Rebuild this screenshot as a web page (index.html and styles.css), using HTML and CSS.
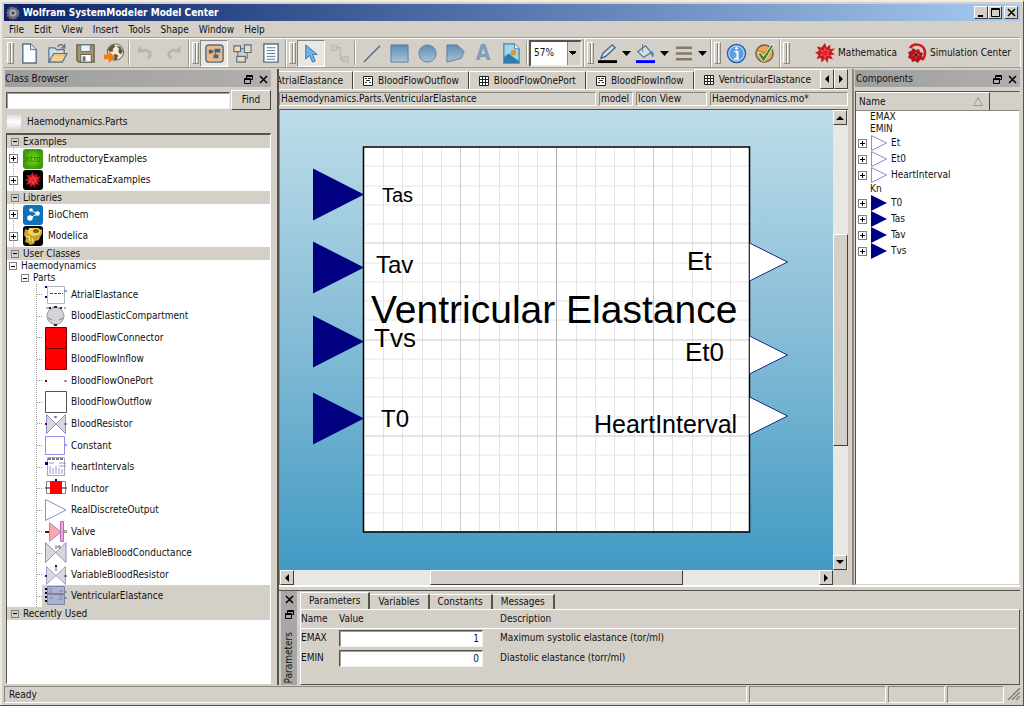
FILE: index.html
```html
<!DOCTYPE html>
<html lang="en">
<head>
    <meta charset="UTF-8">
    <meta name="viewport" content="width=device-width, initial-scale=1.0">
    <title>Wolfram SystemModeler Model Center</title>
    <link rel="stylesheet" href="styles.css">
</head>
<body>
    <svg width="0" height="0" class="defs">
        <defs>
            <linearGradient id="steel" x1="0" y1="0" x2="0" y2="1">
                <stop offset="0" stop-color="#5f8cb2" />
                <stop offset="1" stop-color="#a9c2d8" />
            </linearGradient>
            <radialGradient id="lime">
                <stop offset="0" stop-color="#7fe01c" />
                <stop offset="1" stop-color="#3a9a08" />
            </radialGradient>
            <symbol id="spikey" viewBox="0 0 20 20">
                <path d="M10 0l1.500 4.500L15.500 1.500l-.5 4.500 5-.5-3.500 3.500L20 11.500l-4.500.5 2.500 4.500-4.500-1.500L12.500 20 10 16l-3.500 3.500-.5-4.500L1.500 16l2-4L0 9.500l4-1.500L2 3.500l4.500 1z" fill="#c8191c" />
                <path d="M10 4l1.500 3.500 4-.5-2.500 3 2 3.500-3.500-1L10 16l-1.500-3.500-4 .5 2.500-3-2-3.500 3.500 1z" fill="#ee5350" />
                <path d="M10 7l3 2-1 3.500H8L7 9z" fill="#d8282a" />
            </symbol>
            <symbol id="tri-out" viewBox="0 0 18 16">
                <path d="M1.500.5v15L16.500 8z" fill="#fff" stroke="#8c8ccf" />
            </symbol>
            <symbol id="tri-in" viewBox="0 0 18 16">
                <path d="M1 0v16L17 8z" fill="#000080" />
            </symbol>
            <symbol id="float" viewBox="0 0 9 9">
                <path d="M2.500 3V.5h6v4H7M2.500 1.500h6M.5 3.500h6v5h-6zM.5 4.500h6" fill="none" stroke="#000" />
            </symbol>
            <symbol id="close" viewBox="0 0 9 9">
                <path d="M1 1l7 7M8 1L1 8" fill="none" stroke="#000" stroke-width="1.500" />
            </symbol>
            <symbol id="grid-icon" viewBox="0 0 10 10">
                <path d="M.5 .5h9v9h-9zM3.500 0v10M6.500 0v10M0 3.500h10M0 6.500h10" fill="#fff" stroke="#222" />
            </symbol>
            <symbol id="text-icon" viewBox="0 0 10 10">
                <path d="M.5 .5h9v9h-9z" fill="#fff" stroke="#222" />
                <path d="M2 2.500h2M5 2.500h3M3 4.500h4M2 6.500h2M6 6.500h2" fill="none" stroke="#333" />
            </symbol>
            <symbol id="down" viewBox="0 0 9 5">
                <path d="M0 0h9L4.500 5z" />
            </symbol>
        </defs>
    </svg>

    <div class="window">
        <header class="titlebar">
            <svg class="app-icon" viewBox="0 0 14 14">
                <path d="M7 0l1.500 2 2-1 .5 2.500 2.500.5-1 2L14 7l-1.500 1.500 1 2-2.500.5-.5 2.500-2-1L7 14l-1.500-1.500-2 1L3 11l-2.500-.5 1-2L0 7l1.500-1.500-1-2L3 3l.5-2.500 2 1z" fill="#6c6c78" />
                <circle cx="7" cy="7" r="3.500" fill="#a8aab4" />
                <circle cx="7" cy="7" r="1.500" fill="#3c3c48" />
                <path d="M2 10l2 3M10 12l2-2" stroke="#c02030" />
            </svg>
            <h1>Wolfram SystemModeler Model Center</h1>
            <div class="win-buttons">
                <button aria-label="Minimize"><svg viewBox="0 0 9 9"><path d="M1 7h5v2H1z" /></svg></button>
                <button aria-label="Maximize"><svg viewBox="0 0 9 9"><path d="M.5 .5h8v8h-8zM0 1.500h9" fill="none" stroke="#000" /></svg></button>
                <button aria-label="Close"><svg><use href="#close" /></svg></button>
            </div>
        </header>

        <nav class="menubar">
            <button>File</button>
            <button>Edit</button>
            <button>View</button>
            <button>Insert</button>
            <button>Tools</button>
            <button>Shape</button>
            <button>Window</button>
            <button>Help</button>
        </nav>

        <div class="toolbar">
            <div class="group">
                <span class="grip"></span>
                <button class="tool" aria-label="New"><svg viewBox="0 0 22 22"><path d="M4 1h8l6 6v14H4z" fill="#fff" stroke="#53738c" stroke-width="1.500" /><path d="M12 1v6h6" fill="#dbe6ee" stroke="#53738c" /></svg></button>
                <button class="tool" aria-label="Open"><svg viewBox="0 0 22 22"><path d="M2 20V5h6l2 2h8v4" fill="#cfe0ea" stroke="#53738c" stroke-width="1.300" /><path d="M2 20l5-9h14l-5 9z" fill="#f1c27d" stroke="#53738c" stroke-width="1.300" /><path d="M5 15h13M4 17.500h13" stroke="#fbe4bd" /><path d="M11 4c2-3 5-3 7 0M18.500 1v4h-4" fill="none" stroke="#53738c" stroke-width="1.300" /></svg></button>
                <button class="tool" aria-label="Save"><svg viewBox="0 0 22 22"><path d="M2 2h18v18H4l-2-2z" fill="#a9946e" stroke="#5d5a4a" stroke-width="1.300" /><path d="M6 2h10v7H6z" fill="#e9f0f4" stroke="#53738c" /><path d="M6 12h11v8H6z" fill="#fff" stroke="#5d5a4a" /><path d="M8 14h3v5H8z" fill="#53738c" /></svg></button>
                <button class="tool" aria-label="Export"><svg viewBox="0 0 22 22"><circle cx="13" cy="9.500" r="8.500" fill="#f3ecd4" stroke="#5c573f" /><path d="M7 4l4-2.500 2 2-3 3 1 2-3 1-3-2zM14 3l4 1 3 5-3 3-2-3 1-3zM12 11l4 2-2 5-3-1z" fill="#5c573f" /><path d="M1 12h5V8.500L13 15l-7 6v-4H1z" fill="#f07f13" /></svg></button>
                <span class="sep"></span>
                <button class="tool" aria-label="Undo"><svg viewBox="0 0 22 22"><path d="M6 9c4-3 10-1 10 3 0 2-1 3-3 4" fill="none" stroke="#b9b6b0" stroke-width="3" /><path d="M3 10l1-7 6 7z" fill="#b9b6b0" /></svg></button>
                <button class="tool" aria-label="Redo"><svg viewBox="0 0 22 22"><path d="M16 9c-4-3-10-1-10 3 0 2 1 3 3 4" fill="none" stroke="#b9b6b0" stroke-width="3" /><path d="M19 10l-1-7-6 7z" fill="#b9b6b0" /></svg></button>
            </div>
            <div class="group">
                <span class="grip"></span>
                <button class="tool pressed" aria-label="Icon view"><svg viewBox="0 0 22 22"><rect x="2" y="2" width="18" height="18" rx="3" fill="#f2b884" stroke="#4c6e8c" stroke-width="1.500" /><path d="M11 6h6v4h-6zM5 7h4v4H5zM10 12h5v4h-5z" fill="#3d668a" /><path d="M9 9h2M12 10v2" stroke="#3d668a" fill="none" /></svg></button>
                <button class="tool" aria-label="Diagram view"><svg viewBox="0 0 22 22"><path d="M6 9v8M9 6h4M16 10v6h-3" fill="none" stroke="#53738c" /><path d="M2 3h7v6H2zM13 2h7v8h-7zM5 14h9v6H5z" fill="#f3d6b4" stroke="#53738c" stroke-width="1.200" /></svg></button>
                <button class="tool" aria-label="Text view"><svg viewBox="0 0 22 22"><path d="M4 1h15v19H4z" fill="#fff" stroke="#53738c" stroke-width="1.500" /><path d="M7 5h9M7 8h9M7 11h9M7 14h9M7 17h9" stroke="#53738c" /></svg></button>
            </div>
            <div class="group">
                <span class="grip"></span>
                <button class="tool pressed" aria-label="Select"><svg viewBox="0 0 22 22"><path d="M5 2l12 10h-5l3 7-3 1-3-7-4 4z" fill="#6fb0e8" stroke="#3f74a8" /></svg></button>
                <button class="tool" aria-label="Connect"><svg viewBox="0 0 22 22"><path d="M2 2h6v6H2zM14 14h6v6h-6z" fill="#cbc8c1" stroke="#b9b6b0" /><path d="M8 5h4v12h2" fill="none" stroke="#b9b6b0" stroke-width="1.500" /></svg></button>
                <span class="sep"></span>
                <button class="tool" aria-label="Line"><svg viewBox="0 0 22 22"><path d="M3 20L20 3" stroke="#4d708e" stroke-width="1.500" /></svg></button>
                <button class="tool" aria-label="Rectangle"><svg viewBox="0 0 22 22"><path d="M2 2h18v18H2z" fill="url(#steel)" stroke="#5d7f9c" /></svg></button>
                <button class="tool" aria-label="Ellipse"><svg viewBox="0 0 22 22"><circle cx="11" cy="11" r="9" fill="url(#steel)" stroke="#5d7f9c" /></svg></button>
                <button class="tool" aria-label="Polygon"><svg viewBox="0 0 22 22"><path d="M2 2h11l7 7-3 7-15 4z" fill="url(#steel)" stroke="#5d7f9c" /></svg></button>
                <button class="tool letter" aria-label="Text">A</button>
                <button class="tool" aria-label="Bitmap"><svg viewBox="0 0 22 22"><path d="M3 1h11l5 5v15H3z" fill="#a4d5ee" stroke="#4585ae" stroke-width="1.300" /><path d="M3 15l5-4 11 8v2H3z" fill="#2f7dad" /><path d="M14 1v5h5" fill="#fff" stroke="#4585ae" /><circle cx="13" cy="10" r="3" fill="#d9982b" /></svg></button>
                <span class="sep"></span>
                <select class="zoom" aria-label="Zoom">
                    <option>57%</option>
                </select>
            </div>
            <div class="group">
                <span class="grip"></span>
                <button class="tool wide" aria-label="Line colour"><svg viewBox="0 0 22 22"><path d="M6 11l10-9 3 3-10 9-5 2z" fill="#c7dcea" stroke="#3c627f" stroke-width="1.300" /><path d="M1 18h20v3H1z" /></svg><svg class="arrow"><use href="#down" /></svg></button>
                <button class="tool wide" aria-label="Fill colour"><svg viewBox="0 0 22 22"><path d="M3 9l8-6 6 7-8 5z" fill="#cfdfe9" stroke="#53738c" stroke-width="1.300" /><path d="M8 1v8" stroke="#53738c" /><path d="M16 8c4 1 4 4 3 7-2-1-2-4-3-7z" fill="#4585c4" /><path d="M1 18h20v3H1z" fill="#0000ff" /></svg><svg class="arrow"><use href="#down" /></svg></button>
                <button class="tool wide" aria-label="Line width"><svg viewBox="0 0 22 22"><path d="M3 5h17M3 11h17M3 17h17" stroke="#807a66" stroke-width="2.500" /></svg><svg class="arrow"><use href="#down" /></svg></button>
            </div>
            <div class="group">
                <span class="grip"></span>
                <button class="tool" aria-label="Information"><svg viewBox="0 0 22 22"><circle cx="11" cy="11" r="9.500" fill="#5f9ddb" stroke="#2f66a4" stroke-width="1.500" /><circle cx="11" cy="11" r="8" fill="none" stroke="#d5e7f7" /><path d="M9 9h3v7M8.500 16.500h5" fill="none" stroke="#fff" stroke-width="2" /><circle cx="11" cy="5.500" r="1.300" fill="#fff" /></svg></button>
                <button class="tool" aria-label="Validate class"><svg viewBox="0 0 22 22"><circle cx="11" cy="11" r="9" fill="#e9a65c" stroke="#6d6248" stroke-width="1.500" /><path d="M2 7l9 3 7-6M4 16l7-6 2 10" fill="none" stroke="#c27c30" /><path d="M4 11l3-1 3 4 8-12h3L11 19H9z" fill="#3f8a25" stroke="#fff" stroke-width=".8" /></svg></button>
            </div>
            <div class="group last">
                <span class="grip"></span>
                <button class="launch"><svg viewBox="0 0 20 20"><use href="#spikey" /></svg>Mathematica</button>
                <button class="launch"><svg viewBox="0 0 20 20"><path d="M3 5C7-1 18 1 18 10c0 3-1 5-3 7" fill="none" stroke="#d4161a" stroke-width="2.500" /><path d="M6 5l3 2 3-1 1 3 3 1-1 3 1 3-3 1-2 3-3-2-3 1-1-3-3-1 1-3-1-3 3-1z" fill="#b3151a" /><path d="M9 8l1 3 3 1-3 1-1 3-1-3-3-1 3-1z" fill="#e65b5b" /><circle cx="9" cy="12" r="1.500" fill="#5b070a" /></svg>Simulation Center</button>
            </div>
        </div>

        <main class="workspace">
            <section class="dock classes">
                <div class="dock-title">
                    <h2>Class Browser</h2>
                    <button aria-label="Float"><svg><use href="#float" /></svg></button>
                    <button aria-label="Close"><svg><use href="#close" /></svg></button>
                </div>
                <form class="search">
                    <input type="text" aria-label="Find class">
                    <button type="button">Find</button>
                </form>
                <p class="current"><span class="blank-icon"></span>Haemodynamics.Parts</p>
                <div class="tree">
                    <h3><button class="box minus" aria-label="Collapse"></button>Examples</h3>
                    <ul class="roots">
                        <li><button class="box plus" aria-label="Expand"></button><svg viewBox="0 0 20 20"><rect width="20" height="20" rx="3" fill="url(#lime)" /><text x="1" y="13" class="intro">intro</text></svg>IntroductoryExamples</li>
                        <li><button class="box plus" aria-label="Expand"></button><svg viewBox="0 0 20 20"><rect width="20" height="20" rx="3" /><use href="#spikey" x="2" y="2" width="16" height="16" /></svg>MathematicaExamples</li>
                    </ul>
                    <h3><button class="box minus" aria-label="Collapse"></button>Libraries</h3>
                    <ul class="roots">
                        <li><button class="box plus" aria-label="Expand"></button><svg viewBox="0 0 20 20"><rect width="20" height="20" rx="3" fill="#0d72b8" /><path d="M8 5l6 4-7 4" fill="none" stroke="#fff" /><circle cx="8" cy="5" r="1.800" fill="#fff" /><circle cx="14.500" cy="8.500" r="2.300" fill="#fff" /><circle cx="7" cy="13" r="2.800" fill="#fff" /></svg>BioChem</li>
                        <li><button class="box plus" aria-label="Expand"></button><svg viewBox="0 0 20 20"><rect width="20" height="20" rx="3" /><path d="M2 3l3 1 2-2h8l2 2 2-1v5l-2 3-1 3-4 1-1 3-4 1-2-2-3-1 1-4-2-3z" fill="#c9a32a" /><path d="M6 2h9l3 2-2 5-7 1-4-3z" fill="#f2d65c" /><ellipse cx="13" cy="5" rx="3" ry="2" fill="#7e6418" /><path d="M3 11l3-1 1 5M9 12l1 4" stroke="#fff0a0" fill="none" /></svg>Modelica</li>
                    </ul>
                    <h3><button class="box minus" aria-label="Collapse"></button>User Classes</h3>
                    <p class="node"><button class="box minus" aria-label="Collapse"></button>Haemodynamics</p>
                    <p class="node child"><button class="box minus" aria-label="Collapse"></button>Parts</p>
                    <ul class="leaves">
                        <li><span><svg viewBox="0 0 22 22"><path d="M2.500 2.500h17v17h-17z" fill="#fff" stroke="#b5b5bd" /><path d="M5 9.500h13" stroke="#555" stroke-dasharray="3 1" /><path d="M0 2h2v2H0zM0 12h2v2H0z" fill="#000080" /><path d="M19 6l3 1-3 1" fill="none" stroke="#8c8ccf" /></svg>AtrialElastance</span></li>
                        <li><span><svg viewBox="0 0 22 22"><path d="M1 3h20" stroke="#667" stroke-dasharray="4 2" /><circle cx="10.500" cy="11" r="8.500" fill="#d4d4d8" stroke="#9a9aa8" /><path d="M3 13l4 2M18 13l-4 2" stroke="#778" /><path d="M9 1h3v2H9zM4 2h2v2H4zM15 2h2v2h-2zM9 19h3v2H9z" fill="#224" /></svg>BloodElasticCompartment</span></li>
                        <li><span><svg viewBox="0 0 22 22"><path d="M.5 .5h21v21H.5z" fill="#f00" stroke="#7c0000" /></svg>BloodFlowConnector</span></li>
                        <li><span><svg viewBox="0 0 22 22"><path d="M.5 .5h21v21H.5z" fill="#f00" stroke="#7c0000" /></svg>BloodFlowInflow</span></li>
                        <li><span><svg viewBox="0 0 22 22"><path d="M0 10h2v2H0z" fill="#800000" /><path d="M19.500 10.500h2v1h-2z" fill="none" stroke="#888" /></svg>BloodFlowOnePort</span></li>
                        <li><span><svg viewBox="0 0 22 22"><path d="M.5 .5h21v21H.5z" fill="#fff" stroke="#555" /></svg>BloodFlowOutflow</span></li>
                        <li><span><svg viewBox="0 0 22 22"><path d="M1.500 1.500v19L20.500 1.500v19z" fill="#d8d8dc" stroke="#8f8fd6" /><path d="M0 10h2v2H0z" fill="#800000" /><path d="M9.500 3.500h2v1h-2zM19.500 10.500h2v1h-2z" fill="none" stroke="#779" /></svg>BloodResistor</span></li>
                        <li><span><svg viewBox="0 0 22 22"><path d="M.5 1.500h19v18H.5z" fill="#fff" stroke="#8f8fe6" /><path d="M20 9l2 1-2 1" fill="none" stroke="#8f8fd6" /></svg>Constant</span></li>
                        <li><span><svg viewBox="0 0 22 22"><path d="M2.500 1.500h17v18h-17z" fill="#fff" stroke="#aaa" /><path d="M3 3h16" stroke="#777" stroke-width="2" stroke-dasharray="3 1" /><path d="M0 6h3v3H0z" fill="#000080" /><path d="M4 7h5M14 7h7M14 10h7" stroke="#8f8fd6" /><path d="M5 10v8M8 12v6M11 10v8M14 12v6M17 13v5" stroke="#8f8fd6" /></svg>heartIntervals</span></li>
                        <li><span><svg viewBox="0 0 22 22"><path d="M1.500 3.500h19v12h-19z" fill="#fff" stroke="#888" /><path d="M5 3h12v13H5z" fill="#f00" /><path d="M0 10h5M17 10h5" stroke="#500" /><path d="M10 1h2v2h-2z" fill="#000080" /></svg>Inductor</span></li>
                        <li><span><svg viewBox="0 0 22 22"><path d="M.5 .5v21L21 11z" fill="#fff" stroke="#8c8ccf" /></svg>RealDiscreteOutput</span></li>
                        <li><span><svg viewBox="0 0 22 22"><path d="M4.500 1.500v19L16 11z" fill="#f9a8ae" stroke="#a088cc" /><path d="M15.500 .5h3v20h-3z" fill="#f6a0cc" stroke="#b070c0" /><path d="M0 10h4v2H0z" fill="#800000" /><path d="M19.500 9.500h2v2h-2z" fill="#fff" stroke="#888" /></svg>Valve</span></li>
                        <li><span><svg viewBox="0 0 22 22"><path d="M.5 .5v20L21 .5v20z" fill="#d8d8dc" stroke="#8f8fd6" /><path d="M11 3v4M13 6V4h2v3" fill="none" stroke="#667" /></svg>VariableBloodConductance</span></li>
                        <li><span><svg viewBox="0 0 22 22"><path d="M1.500 2.500v18L20.500 2.500v18z" fill="#d8d8dc" stroke="#9f9fd6" /><path d="M10 1h2v2h-2zM0 11h2v2H0z" fill="#224" /><path d="M11 3v4M19.500 11.500h2v1h-2z" fill="none" stroke="#667" /></svg>VariableBloodResistor</span></li>
                        <li class="selected"><span><svg viewBox="0 0 22 22"><path d="M2.500 1.500h17v18h-17z" fill="#aab3cf" stroke="#7c86ab" /><path d="M3 9h16" stroke="#556" /><path d="M4 4h3M4 7h3M4 13h4M14 6h4M14 11h4M13 14h5" stroke="#7c86ab" /><path d="M0 3h2v2H0zM0 7h2v2H0zM0 11h2v2H0zM0 15h2v2H0z" fill="#000050" /><path d="M19 6l3 1-3 1M19 12l3 1-3 1" fill="none" stroke="#889" /></svg>VentricularElastance</span></li>
                    </ul>
                    <h3><button class="box minus" aria-label="Collapse"></button>Recently Used</h3>
                </div>
            </section>

            <div class="right-side">
                <div class="upper">
                    <section class="editor">
                        <div class="tabs">
                            <div class="tab-strip">
                                <button class="tab">AtrialElastance</button>
                                <button class="tab"><svg><use href="#text-icon" /></svg>BloodFlowOutflow</button>
                                <button class="tab"><svg><use href="#grid-icon" /></svg>BloodFlowOnePort</button>
                                <button class="tab"><svg><use href="#text-icon" /></svg>BloodFlowInflow</button>
                                <button class="tab active"><svg><use href="#grid-icon" /></svg>VentricularElastance</button>
                            </div>
                            <button class="scroll-btn" aria-label="Scroll tabs left"><svg viewBox="0 0 8 8"><path d="M6 0v8L2 4z" /></svg></button>
                            <button class="scroll-btn" aria-label="Scroll tabs right"><svg viewBox="0 0 8 8"><path d="M2 0v8l4-4z" /></svg></button>
                        </div>
                        <div class="path">
                            <span>Haemodynamics.Parts.VentricularElastance</span>
                            <span>model</span>
                            <span>Icon View</span>
                            <span>Haemodynamics.mo*</span>
                        </div>
                        <div class="view">
                            <svg class="canvas" viewBox="0 0 553 459">
                                <rect x="84" y="36" width="385" height="385" fill="#fff" />
                                <!-- minor grid -->
                                <path class="minor" d="M103.500 37v384M122.500 37v384M142.500 37v384M161.500 37v384M199.500 37v384M219.500 37v384M238.500 37v384M257.500 37v384M296.500 37v384M315.500 37v384M334.500 37v384M354.500 37v384M392.500 37v384M412.500 37v384M431.500 37v384M450.500 37v384M85 55.500h384M85 75.500h384M85 94.500h384M85 113.500h384M85 152.500h384M85 171.500h384M85 190.500h384M85 209.500h384M85 248.500h384M85 267.500h384M85 286.500h384M85 306.500h384M85 344.500h384M85 364.500h384M85 383.500h384M85 402.500h384" />
                                <path class="major" d="M180.500 37v384M373.500 37v384M85 132.500h384M85 325.500h384M85 229.500h384" />
                                <path class="axis" d="M276.500 37v384" />
                                <rect x="83.500" y="36.500" width="386" height="385" fill="none" stroke="#000" stroke-width="1.500" />
                                <!-- input ports -->
                                <path class="input" d="M33 58v52l51-26zM33 131v52l51-26zM33 205v52l51-26zM33 282v52l51-26z" />
                                <!-- output ports -->
                                <path class="output" d="M469.500 132.500v38l38-19zM469.500 225.500v38l38-19zM469.500 286.500v38l38-19z" />
                                <g class="labels">
                                    <text x="102" y="91" class="small">Tas</text>
                                    <text x="96" y="162" class="medium">Tav</text>
                                    <text x="94" y="236" class="large">Tvs</text>
                                    <text x="101" y="316" class="medium">T0</text>
                                    <text x="91" y="212" class="name">Ventricular Elastance</text>
                                    <text x="407" y="159" class="large">Et</text>
                                    <text x="405" y="250" class="large">Et0</text>
                                    <text x="314" y="322" class="output-label">HeartInterval</text>
                                </g>
                            </svg>
                            <div class="scroll vertical">
                                <button class="scroll-btn" aria-label="Scroll up"><svg viewBox="0 0 8 8"><path d="M0 6h8L4 2z" /></svg></button>
                                <span class="before"></span><span class="thumb"></span><span class="after"></span>
                                <button class="scroll-btn" aria-label="Scroll down"><svg viewBox="0 0 8 8"><path d="M0 2h8L4 6z" /></svg></button>
                            </div>
                            <div class="scroll horizontal">
                                <button class="scroll-btn" aria-label="Scroll left"><svg viewBox="0 0 8 8"><path d="M6 0v8L2 4z" /></svg></button>
                                <span class="before"></span><span class="thumb"></span><span class="after"></span>
                                <button class="scroll-btn" aria-label="Scroll right"><svg viewBox="0 0 8 8"><path d="M2 0v8l4-4z" /></svg></button>
                            </div>
                        </div>
                    </section>

                    <section class="dock components">
                        <div class="dock-title">
                            <h2>Components</h2>
                            <button aria-label="Float"><svg><use href="#float" /></svg></button>
                            <button aria-label="Close"><svg><use href="#close" /></svg></button>
                        </div>
                        <div class="list">
                            <div class="list-head"><button>Name<svg viewBox="0 0 10 9"><path d="M.5 8.500L5 .5l4.500 8z" fill="none" stroke="#a09d96" /></svg></button></div>
                            <ul>
                                <li class="plain">EMAX</li>
                                <li class="plain">EMIN</li>
                                <li><button class="box plus" aria-label="Expand"></button><svg><use href="#tri-out" /></svg>Et</li>
                                <li><button class="box plus" aria-label="Expand"></button><svg><use href="#tri-out" /></svg>Et0</li>
                                <li><button class="box plus" aria-label="Expand"></button><svg><use href="#tri-out" /></svg>HeartInterval</li>
                                <li class="plain">Kn</li>
                                <li><button class="box plus" aria-label="Expand"></button><svg><use href="#tri-in" /></svg>T0</li>
                                <li><button class="box plus" aria-label="Expand"></button><svg><use href="#tri-in" /></svg>Tas</li>
                                <li><button class="box plus" aria-label="Expand"></button><svg><use href="#tri-in" /></svg>Tav</li>
                                <li><button class="box plus" aria-label="Expand"></button><svg><use href="#tri-in" /></svg>Tvs</li>
                            </ul>
                        </div>
                    </section>
                </div>

                <section class="params">
                    <div class="side-title">
                        <button aria-label="Close"><svg><use href="#close" /></svg></button>
                        <button aria-label="Float"><svg><use href="#float" /></svg></button>
                        <h2>Parameters</h2>
                    </div>
                    <div class="params-body">
                        <div class="param-tabs">
                            <button class="active">Parameters</button>
                            <button>Variables</button>
                            <button>Constants</button>
                            <button>Messages</button>
                        </div>
                        <div class="param-page">
                            <table>
                                <thead>
                                    <tr><th class="c-name">Name</th><th class="c-value">Value</th><th>Description</th></tr>
                                </thead>
                                <tbody>
                                    <tr><td><label for="emax">EMAX</label></td><td><input type="text" id="emax" value="1"></td><td>Maximum systolic elastance (tor/ml)</td></tr>
                                    <tr><td><label for="emin">EMIN</label></td><td><input type="text" id="emin" value="0"></td><td>Diastolic elastance (torr/ml)</td></tr>
                                </tbody>
                            </table>
                        </div>
                    </div>
                </section>
            </div>
        </main>

        <footer class="status">
            <span>Ready</span>
            <span></span>
            <span></span>
            <span></span>
            <svg viewBox="0 0 14 14"><path d="M2 14L14 2M6 14l8-8M10 14l4-4" stroke="#808080" stroke-width="1.500" /></svg>
        </footer>
    </div>
</body>
</html>
```
FILE: styles.css
```css
* {
  box-sizing: border-box;
}

body {
  margin: 0;
  font: 10px/12px "DejaVu Sans Condensed", "DejaVu Sans", sans-serif;
  color: #111;
  background: #d4d0c8;
}

h1, h2, h3, p, ul {
  margin: 0;
  padding: 0;
  font-size: 10px;
  font-weight: normal;
  list-style: none;
}

button, input, select {
  margin: 0;
  padding: 0;
  font: inherit;
  color: inherit;
  border: none;
  border-radius: 0;
  background: none;
}

.defs {
  position: absolute;
}

.window {
  display: flex;
  flex-direction: column;
  height: 100vh;
  padding: 2px 3px 2px 4px;
  border: 1px solid #55534e;
  border-width: 0 1px 1px 0;
  border-top: 2px solid #f0ede2;
  box-shadow: inset 2px 0 #ece9e0;
}

/* title and menu */

.titlebar {
  display: flex;
  align-items: center;
  height: 17px;
  padding: 0 2px;
  background: linear-gradient(to right, #0a246a, #a6caf0);
}

.app-icon {
  width: 14px;
  height: 14px;
}

.titlebar h1 {
  flex: 1;
  padding-left: 3px;
  font-weight: bold;
  color: #fff;
}

.win-buttons {
  display: flex;
}

.win-buttons button {
  display: flex;
  align-items: center;
  justify-content: center;
  width: 14px;
  height: 13px;
}

.win-buttons button:last-child {
  margin-left: 2px;
}

.win-buttons svg {
  width: 9px;
  height: 9px;
}

.win-buttons button,
.scroll-btn,
.thumb,
.search button {
  background: #d4d0c8;
  border: 1px solid;
  border-color: #fff #404040 #404040 #fff;
}

.menubar {
  display: flex;
  gap: 10px;
  height: 17px;
  padding: 0 5px;
}

/* toolbar */

.toolbar {
  display: flex;
  height: 30px;
  border-top: 1px solid #fff;
  border-bottom: 1px solid #a09d96;
  box-shadow: 0 -1px #a09d96;
}

.group {
  display: flex;
  align-items: center;
  padding-right: 1px;
  border-right: 1px solid #a09d96;
  box-shadow: 1px 0 #fff;
}

.group.last {
  flex: 1;
  border: none;
  padding-right: 9px;
  justify-content: flex-end;
  gap: 10px;
}

.grip {
  width: 7px;
  height: 22px;
  margin: 0 1px 0 3px;
  border: 1px solid;
  border-color: #fff #8a877f #8a877f #fff;
  background: linear-gradient(to right, #d4d0c8 2px, #8a877f 2px, #8a877f 3px, #fff 3px, #fff 4px, #d4d0c8 4px);
}

.group.last .grip {
  margin-right: auto;
}

.tool {
  display: flex;
  align-items: center;
  justify-content: center;
  width: 28px;
  height: 27px;
}

.tool svg {
  width: 21px;
  height: 21px;
}

.tool.pressed {
  border: 1px solid;
  border-color: #8a877f #fff #fff #8a877f;
  background: #e9e7e2;
}

.tool.wide {
  width: 38px;
  gap: 4px;
}

.tool .arrow {
  width: 9px;
  height: 5px;
}

.tool.letter {
  font: bold 21px "DejaVu Sans Condensed", sans-serif;
  color: #7d9db8;
}

.sep {
  width: 2px;
  height: 24px;
  margin: 0 1px;
  border-left: 1px solid #a09d96;
  border-right: 1px solid #fff;
}

.zoom {
  width: 53px;
  height: 27px;
  padding: 0 3px;
  border: 2px solid;
  border-color: #55534e #e8e5de #e8e5de #55534e;
  appearance: none;
  background: conic-gradient(from -45deg at 50% 100%, #000 90deg, transparent 0) right 3px top 10px / 7px 4px no-repeat, linear-gradient(to right, #8a877f 1px, #d4d0c8 1px) right / 13px no-repeat #fff;
  background: linear-gradient(135deg, #000 50%, transparent 50%) right 3px center / 4px 4px no-repeat, linear-gradient(225deg, #000 50%, transparent 50%) right 7px center / 4px 4px no-repeat, linear-gradient(to right, #8a877f 1px, #d4d0c8 1px) right / 13px no-repeat #fff;
}

.launch {
  display: flex;
  align-items: center;
  gap: 3px;
}

.launch svg {
  width: 20px;
  height: 20px;
}

/* docks */

.workspace {
  display: flex;
  flex: 1;
  min-height: 0;
  padding-top: 1px;
}

.dock {
  display: flex;
  flex-direction: column;
  padding-top: 1px;
}

.classes {
  width: 266px;
  margin: 0 6px 1px 1px;
}

.dock-title {
  display: flex;
  align-items: center;
  gap: 6px;
  height: 17px;
  padding: 1px 3px 0 0;
  background: linear-gradient(to right, #9e9e9e, #b0afad);
}

.dock-title h2 {
  flex: 1;
}

.dock-title button,
.side-title button {
  display: flex;
}

.dock-title svg,
.side-title svg {
  width: 9px;
  height: 9px;
}

.search {
  display: flex;
  gap: 1px;
  align-items: center;
  margin-top: 3px;
}

.search input {
  flex: 1;
  min-width: 0;
  height: 17px;
  margin-left: 1px;
}

.search button {
  width: 40px;
  height: 20px;
}

.search input,
.params input {
  background: #fff;
  border: 1px solid;
  border-color: #55534e #f2f0ea #f2f0ea #55534e;
  box-shadow: inset 1px 1px #a09d96;
}

.current {
  display: flex;
  align-items: center;
  gap: 6px;
  height: 23px;
  padding-left: 2px;
}

.blank-icon {
  width: 14px;
  height: 14px;
  background: linear-gradient(#ddd, #fff, #ddd);
}

.tree {
  flex: 1;
  min-height: 0;
  margin-left: 1px;
  background: #fff;
  border: 1px solid #fff;
  border-top: 2px solid #55534e;
  border-left: 1px solid #55534e;
}

.tree h3 {
  display: flex;
  align-items: center;
  gap: 4px;
  height: 13px;
  padding-left: 4px;
  background: #d4d0c8;
}

/* plus and minus boxes */
.box {
  flex: none;
  width: 8px;
  height: 8px;
  border: 1px solid #808080;
  background: linear-gradient(#000, #000) center / 4px 1px no-repeat;
}

.box.plus {
  width: 9px;
  height: 9px;
  background: linear-gradient(#000, #000) center / 5px 1px no-repeat, linear-gradient(#000, #000) center / 1px 5px no-repeat #fff;
}

.roots {
  display: grid;
  grid-auto-rows: 1fr;
  height: 43px;
}

.roots li {
  display: flex;
  align-items: center;
  gap: 5px;
  padding-left: 2px;
  background: repeating-linear-gradient(#aaa, #aaa 1px, transparent 1px, transparent 2px) 6px 0 / 1px 100% no-repeat;
}

.roots svg {
  width: 20px;
  height: 20px;
}

.intro {
  font: 8px "DejaVu Sans Condensed", sans-serif;
  fill: #1c6a00;
}

.node {
  display: flex;
  align-items: center;
  gap: 4px;
  height: 12px;
  padding-left: 2px;
}

.node.child {
  padding-left: 14px;
}

.leaves {
  display: grid;
  grid-auto-rows: minmax(0, 1fr);
  height: 323px;
  margin-left: 29px;
  border-left: 1px dotted #999;
}

.leaves li {
  display: flex;
  align-items: center;
}

.leaves li::before {
  content: "";
  width: 5px;
  border-top: 1px dotted #999;
}

.leaves li > span {
  flex: 1;
  display: flex;
  align-items: center;
  gap: 4px;
  padding-left: 3px;
}

.leaves .selected > span {
  background: #d4d0c8;
}

.leaves svg {
  width: 22px;
  height: 22px;
}

/* editor */

.right-side {
  flex: 1;
  min-width: 0;
  display: flex;
  flex-direction: column;
  border-left: 2px solid #55534e;
}

.upper {
  display: flex;
  flex: 1;
  min-height: 0;
  border-bottom: 2px solid #fff;
}

.editor {
  flex: 1;
  min-width: 0;
  display: flex;
  flex-direction: column;
  padding-right: 4px;
  border-right: 2px solid #8a877f;
}

.tabs {
  display: flex;
  height: 20px;
}

.tab-strip {
  flex: 1;
  min-width: 0;
  display: flex;
  justify-content: flex-end;
  overflow: hidden;
}

.tab {
  flex: none;
  display: flex;
  align-items: center;
  gap: 5px;
  height: 18px;
  margin-top: 2px;
  padding: 0 9px;
  border-top: 1px solid #fff;
  border-left: 1px solid #fff;
  border-right: 1px solid #404040;
}

.tab.active {
  height: 20px;
  margin-top: 0;
  border-right: none;
}

.tab svg {
  width: 10px;
  height: 10px;
}

.scroll-btn {
  flex: none;
  display: flex;
  align-items: center;
  justify-content: center;
  width: 14px;
  height: 15px;
}

.tabs .scroll-btn {
  height: 20px;
}

.scroll-btn svg {
  width: 8px;
  height: 8px;
}

.path {
  display: grid;
  grid-template-columns: 1fr 34px 71px 138px;
  gap: 3px;
  padding-top: 2px;
  margin-bottom: 3px;
  border-top: 1px solid #fff;
}

.path span {
  height: 14px;
  padding-left: 1px;
  overflow: hidden;
  border: 1px solid;
  border-color: #8a877f #fff #fff #8a877f;
}

.view {
  flex: 1;
  min-height: 0;
  display: grid;
  grid-template-columns: 1fr 15px;
  grid-template-rows: 1fr 15px;
  border-top: 1px solid #55534e;
  border-left: 1px solid #8a877f;
}

.canvas {
  width: 100%;
  height: 100%;
  min-height: 0;
  background: linear-gradient(#bedce9, #84bcd6 50%, #419ac3);
}

.minor {
  stroke: #e4e4e4;
}

.major {
  stroke: #cbcbcb;
}

.axis {
  stroke: #b0b0b0;
}

.input {
  fill: #000080;
}

.output {
  fill: #fff;
  stroke: #1c2a90;
}

.labels {
  font-family: "Liberation Sans", sans-serif;
}

.small {
  font-size: 20px;
}

.medium {
  font-size: 24px;
}

.large {
  font-size: 26px;
}

.name {
  font-size: 39px;
}

.output-label {
  font-size: 25px;
}

.scroll {
  display: flex;
  background: #e9e7e3;
}

.vertical {
  flex-direction: column;
}

.before {
  flex: 11;
}

.thumb {
  flex: 21;
}

.after {
  flex: 11;
}

.horizontal .before {
  flex: 27;
}

.horizontal .thumb {
  flex: 50;
}

.horizontal .after {
  flex: 27;
}

/* components */

.components {
  width: 166px;
  padding-left: 1px;
}

.components .dock-title {
  padding-left: 1px;
}

.list {
  flex: 1;
  margin-top: 4px;
  background: #fff;
  border: 1px solid #d4d0c8;
  border-top-color: #55534e;
  border-left-color: #55534e;
}

.list-head {
  background: #d4d0c8;
  border-bottom: 1px solid #8a877f;
}

.list-head button {
  display: flex;
  align-items: center;
  justify-content: space-between;
  width: 134px;
  height: 18px;
  padding: 0 6px 0 3px;
  border-top: 1px solid #fff;
  border-right: 1px solid #404040;
}

.list-head svg {
  width: 10px;
  height: 9px;
}

.list li {
  display: flex;
  align-items: center;
  gap: 3px;
  height: 16px;
  padding-left: 2px;
}

.list li.plain {
  height: 12px;
  padding-left: 14px;
}

.list li svg {
  width: 18px;
  height: 16px;
}

/* parameters */

.params {
  display: flex;
  gap: 3px;
  margin-top: 3px;
  padding-left: 2px;
  border-top: 1px solid #55534e;
}

.side-title {
  display: flex;
  flex-direction: column;
  align-items: center;
  gap: 6px;
  width: 16px;
  padding: 4px 0 2px;
  background: #a8a7a5;
}

.side-title h2 {
  margin-top: auto;
  writing-mode: vertical-rl;
  transform: rotate(180deg);
}

.params-body {
  flex: 1;
  min-width: 0;
  display: flex;
  flex-direction: column;
}

.param-tabs {
  display: flex;
  align-items: flex-end;
  height: 18px;
}

.param-tabs button {
  height: 15px;
  padding: 0 8px;
  border-top: 1px solid #fff;
  border-right: 2px solid #55534e;
}

.param-tabs .active {
  height: 17px;
  border-left: 1px solid #fff;
}

.param-page {
  height: 76px;
  padding-right: 2px;
  border: 1px solid;
  border-color: #fff #55534e #55534e #fff;
}

.params table {
  width: 100%;
  border-collapse: collapse;
}

.params th {
  height: 18px;
  padding: 0;
  font-weight: normal;
  text-align: left;
  border-bottom: 1px solid #fff;
  box-shadow: 0 1px #a09d96;
}

.params td {
  height: 20px;
  padding: 0;
}

.c-name {
  width: 38px;
}

.c-value {
  width: 161px;
}

.params input {
  display: block;
  width: 144px;
  height: 17px;
  padding: 0 3px;
  text-align: right;
}

/* status bar */

.status {
  display: grid;
  grid-template-columns: 1fr 137px 57px 57px 14px;
  gap: 2px;
  height: 18px;
  padding-top: 1px;
}

.status span {
  padding-left: 4px;
  line-height: 15px;
  border: 1px solid;
  border-color: #8a877f #fff #fff #8a877f;
}
```
